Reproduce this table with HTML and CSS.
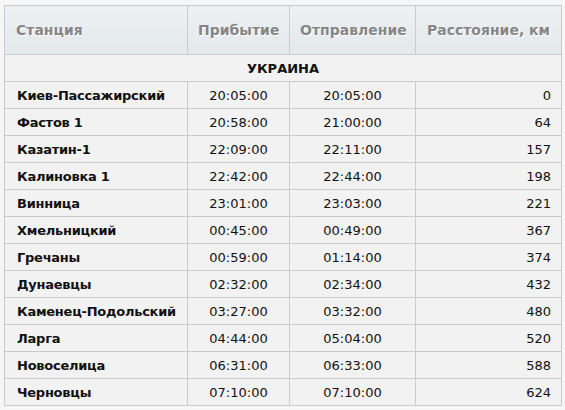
FILE: index.html
```html
<!DOCTYPE html>
<html lang="ru">
<head>
<meta charset="utf-8">
<link rel="stylesheet" href="styles.css">
</head>
<body>
<table class="route">
  <colgroup>
    <col class="c-station">
    <col class="c-arr">
    <col class="c-dep">
    <col class="c-dist">
  </colgroup>
  <thead>
    <tr>
      <th class="station">Станция</th>
      <th>Прибытие</th>
      <th>Отправление</th>
      <th>Расстояние, км</th>
    </tr>
  </thead>
  <tbody>
    <tr class="country"><td colspan="4">УКРАИНА</td></tr>
    <tr><td class="station">Киев-Пассажирский</td><td class="time">20:05:00</td><td class="time">20:05:00</td><td class="dist">0</td></tr>
    <tr><td class="station">Фастов 1</td><td class="time">20:58:00</td><td class="time">21:00:00</td><td class="dist">64</td></tr>
    <tr><td class="station">Казатин-1</td><td class="time">22:09:00</td><td class="time">22:11:00</td><td class="dist">157</td></tr>
    <tr><td class="station">Калиновка 1</td><td class="time">22:42:00</td><td class="time">22:44:00</td><td class="dist">198</td></tr>
    <tr><td class="station">Винница</td><td class="time">23:01:00</td><td class="time">23:03:00</td><td class="dist">221</td></tr>
    <tr><td class="station">Хмельницкий</td><td class="time">00:45:00</td><td class="time">00:49:00</td><td class="dist">367</td></tr>
    <tr><td class="station">Гречаны</td><td class="time">00:59:00</td><td class="time">01:14:00</td><td class="dist">374</td></tr>
    <tr><td class="station">Дунаевцы</td><td class="time">02:32:00</td><td class="time">02:34:00</td><td class="dist">432</td></tr>
    <tr><td class="station">Каменец-Подольский</td><td class="time">03:27:00</td><td class="time">03:32:00</td><td class="dist">480</td></tr>
    <tr><td class="station">Ларга</td><td class="time">04:44:00</td><td class="time">05:04:00</td><td class="dist">520</td></tr>
    <tr><td class="station">Новоселица</td><td class="time">06:31:00</td><td class="time">06:33:00</td><td class="dist">588</td></tr>
    <tr><td class="station">Черновцы</td><td class="time">07:10:00</td><td class="time">07:10:00</td><td class="dist">624</td></tr>
  </tbody>
</table>
</body>
</html>
```
FILE: styles.css
```css
html, body {
  margin: 0;
  background: #f6f6f6;
}
body {
  padding: 5px 4px 0 4px;
  font-family: "DejaVu Sans", Verdana, sans-serif;
  font-size: 13px;
  color: #111;
}
.route {
  border-collapse: collapse;
  table-layout: fixed;
  width: 557px;
  background: #f2f2f3;
  border: 1px solid #c8c8c8;
}
.c-station { width: 183px; }
.c-arr { width: 102px; }
.c-dep { width: 126px; }
.c-dist { width: 146px; }
.route th, .route td {
  border: 1px solid #cbcbcb;
  padding: 0 10px;
  white-space: nowrap;
}
.route th {
  height: 49px;
  box-sizing: border-box;
  background: linear-gradient(#eef1f3, #e3e8eb);
  color: #868686;
  font-size: 14px;
  font-weight: bold;
  text-shadow: 1px 1px 0 #fff;
  text-align: center;
}
.route th.station { text-align: left; padding-left: 11px; }
.route td {
  height: 27px;
  box-sizing: border-box;
}
.route .country td {
  text-align: center;
  font-weight: bold;
}
.route td.station {
  font-weight: bold;
  letter-spacing: -0.25px;
  padding-left: 12px;
}
.route td.time { text-align: center; }
.route td.dist { text-align: right; padding-right: 10px; }
```
